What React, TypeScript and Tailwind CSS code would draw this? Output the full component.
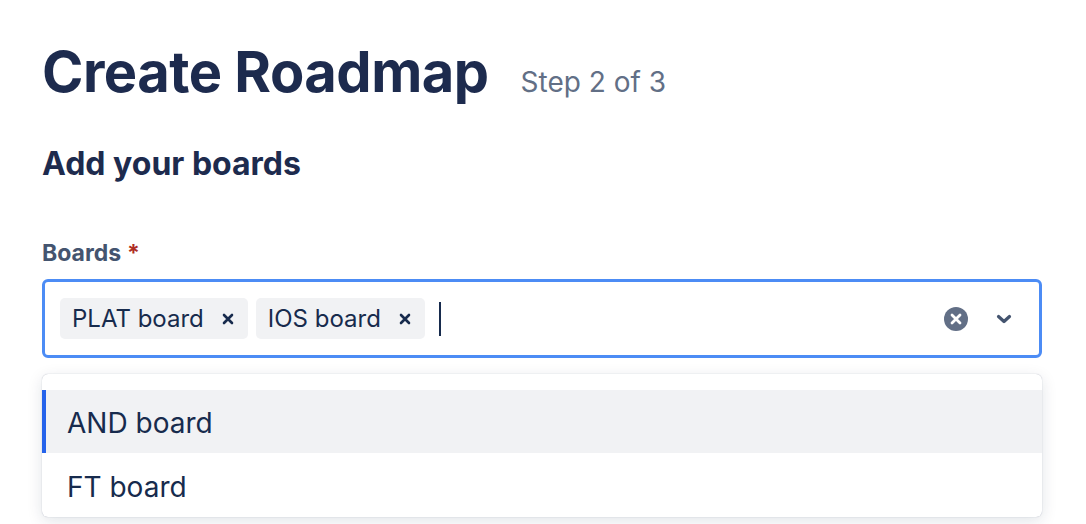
import { ReactNode } from 'react';

const font = { fontFamily: 'Inter, "Noto Sans", sans-serif' };

const RemoveIcon = () => (
  <svg width="12" height="12" viewBox="0 0 12 12" className="text-[#172B4D]">
    <path d="M2 2 L10 10 M10 2 L2 10" stroke="currentColor" strokeWidth="2.6" strokeLinecap="round" />
  </svg>
);

const Chip = ({ children }: { children: ReactNode }) => (
  <div className="flex items-center h-[41px] pl-3 pr-[14px] rounded-[5px] bg-[#F1F2F4] text-[#172B4D] text-[24px] leading-none">
    <span className="pt-[1px]">{children}</span>
    <span className="ml-[18px] flex items-center">
      <RemoveIcon />
    </span>
  </div>
);

const ClearIcon = () => (
  <svg width="24" height="24" viewBox="0 0 24 24">
    <circle cx="12" cy="12" r="12" fill="#626F86" />
    <path d="M8 8 L16 16 M16 8 L8 16" stroke="#fff" strokeWidth="2.8" strokeLinecap="round" />
  </svg>
);

const ChevronIcon = () => (
  <svg width="16" height="10" viewBox="0 0 16 10">
    <path d="M2.5 2.5 L8 7.5 L13.5 2.5" stroke="#44546F" strokeWidth="3.2" strokeLinecap="round" strokeLinejoin="round" fill="none" />
  </svg>
);

export default function App() {
  return (
    <div className="w-[1086px] h-[524px] overflow-hidden bg-white pl-[42px] pr-[44px]" style={font}>
      <div className="flex items-baseline gap-[32px] pt-[44px]">
        <h1 className="text-[56px] leading-none font-bold tracking-[-0.5px] text-[#1D2B4E]">Create Roadmap</h1>
        <span className="text-[28px] leading-none text-[#626F86]">Step 2 of 3</span>
      </div>

      <h2 className="mt-[48px] text-[32px] leading-none font-bold text-[#1D2B4E]">Add your boards</h2>

      <div className="mt-[62px] text-[23px] leading-none font-bold text-[#44546F]">
        Boards<span className="ml-[6px] text-[#AE2E24]">*</span>
      </div>

      <div className="mt-[14px] h-[79px] w-[1000px] border-[3px] border-[#4C8CF5] rounded-[6px] flex items-center pl-[15px] pr-[27px]">
        <div className="flex items-center gap-2 flex-1">
          <Chip>PLAT board</Chip>
          <Chip>IOS board</Chip>
          <div className="ml-[6px] w-[2px] h-[34px] bg-[#172B4D]" />
        </div>
        <div className="flex items-center gap-[28px]">
          <ClearIcon />
          <ChevronIcon />
        </div>
      </div>

      <div className="mt-[16px] w-[1000px] rounded-[6px] bg-white pt-[16px] shadow-[0_4px_16px_rgba(9,30,66,0.12),0_0_1px_rgba(9,30,66,0.35)]">
        <div className="h-[63px] flex items-center bg-[#F1F2F4] border-l-[4px] border-[#2563EB] pl-[21px] pt-[3px] text-[28px] leading-none text-[#172B4D]">
          AND board
        </div>
        <div className="h-[64px] flex items-center pl-[25px] pt-[3px] text-[28px] leading-none text-[#172B4D]">
          FT board
        </div>
      </div>
    </div>
  );
}
